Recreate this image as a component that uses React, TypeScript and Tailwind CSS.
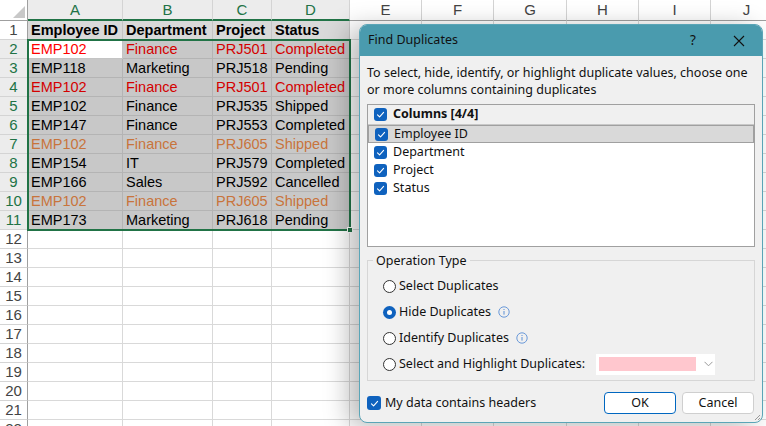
import React from 'react';

const COLS = [
  { l: 'A', w: 95 },
  { l: 'B', w: 90 },
  { l: 'C', w: 59 },
  { l: 'D', w: 78 },
  { l: 'E', w: 72 },
  { l: 'F', w: 72 },
  { l: 'G', w: 73 },
  { l: 'H', w: 72 },
  { l: 'I', w: 72 },
  { l: 'J', w: 72 },
];

type Tone = 'head' | 'red' | 'orange' | 'plain';

const DATA: { cells: string[]; tone: Tone }[] = [
  { cells: ['Employee ID', 'Department', 'Project', 'Status'], tone: 'head' },
  { cells: ['EMP102', 'Finance', 'PRJ501', 'Completed'], tone: 'red' },
  { cells: ['EMP118', 'Marketing', 'PRJ518', 'Pending'], tone: 'plain' },
  { cells: ['EMP102', 'Finance', 'PRJ501', 'Completed'], tone: 'red' },
  { cells: ['EMP102', 'Finance', 'PRJ535', 'Shipped'], tone: 'plain' },
  { cells: ['EMP147', 'Finance', 'PRJ553', 'Completed'], tone: 'plain' },
  { cells: ['EMP102', 'Finance', 'PRJ605', 'Shipped'], tone: 'orange' },
  { cells: ['EMP154', 'IT', 'PRJ579', 'Completed'], tone: 'plain' },
  { cells: ['EMP166', 'Sales', 'PRJ592', 'Cancelled'], tone: 'plain' },
  { cells: ['EMP102', 'Finance', 'PRJ605', 'Shipped'], tone: 'orange' },
  { cells: ['EMP173', 'Marketing', 'PRJ618', 'Pending'], tone: 'plain' },
];

const TOTAL_ROWS = 22;

function cellClass(row: number, col: number, tone: Tone) {
  const inData = col < 4 && row <= DATA.length;
  if (!inData) return 'bg-white border-[#d9d9d9]';
  if (row === 1) return 'bg-[#d9d9d9] border-[#c4c4c4] font-bold text-black';
  const active = row === 2 && col === 0;
  const bg = active ? 'bg-white border-[#c4c4c4]' : 'bg-[#c8c8c8] border-[#b4b4b4]';
  if (tone === 'red') return `${bg} ${active ? 'text-[#ff0000]' : 'text-[#d40000]'}`;
  if (tone === 'orange') return `${bg} text-[#c8743c]`;
  return `${bg} text-black`;
}

function Sheet() {
  return (
    <div className="relative font-['Liberation_Sans',Arial,sans-serif]">
      {/* column headers */}
      <div className="flex h-[21px]">
        <div className="relative w-[28px] shrink-0 border-b border-r border-[#9f9f9f] bg-white">
          <div className="absolute bottom-[2px] right-[2px] h-0 w-0 border-b-[12px] border-l-[12px] border-b-[#c8c8c8] border-l-transparent" />
        </div>
        {COLS.map((c, i) => (
          <div
            key={c.l}
            style={{ width: c.w }}
            className={`shrink-0 border-r border-[#d4d4d4] text-center text-[15px] leading-[19px] ${
              i < 4
                ? 'border-b-2 border-b-[#217346] bg-[#ececec] text-[#217346]'
                : 'border-b border-b-[#9f9f9f] bg-white text-[#444]'
            }`}
          >
            {c.l}
          </div>
        ))}
      </div>
      {/* rows */}
      {Array.from({ length: TOTAL_ROWS }, (_, r) => {
        const row = r + 1;
        const d = DATA[r];
        const selected = row >= 2 && row <= 11;
        return (
          <div key={row} className="flex h-[19px]">
            <div
              className={`w-[28px] shrink-0 border-b border-r border-[#d4d4d4] border-r-[#9f9f9f] text-center text-[15px] leading-[18px] ${
                selected ? 'bg-[#ececec] text-[#217346]' : 'bg-white text-[#444]'
              }`}
            >
              {row}
            </div>
            {COLS.map((c, i) => (
              <div
                key={c.l}
                style={{ width: c.w }}
                className={`shrink-0 overflow-hidden whitespace-nowrap border-b border-r pl-[3px] text-[14.5px] leading-[18px] ${cellClass(
                  row,
                  i,
                  d ? d.tone : 'plain'
                )}`}
              >
                {d && i < 4 ? d.cells[i] : ''}
              </div>
            ))}
          </div>
        );
      })}
      {/* selection frame A2:D11 */}
      <div className="pointer-events-none absolute left-[27px] top-[39px] h-[192px] w-[324px] border-2 border-[#217346]" />
      <div className="absolute left-[347px] top-[227px] h-[6px] w-[6px] border border-white bg-[#217346]" />
    </div>
  );
}

function Check({ className = '' }: { className?: string }) {
  return (
    <span className={`flex h-[13px] w-[13px] shrink-0 items-center justify-center rounded-[3px] bg-[#0f62be] ${className}`}>
      <svg width="9" height="9" viewBox="0 0 9 9" fill="none">
        <path d="M1.5 4.8 3.6 6.8 7.6 2.3" stroke="white" strokeWidth="1.1" strokeLinecap="round" strokeLinejoin="round" />
      </svg>
    </span>
  );
}

function Radio({ on = false }: { on?: boolean }) {
  return on ? (
    <span className="flex h-[13px] w-[13px] shrink-0 items-center justify-center rounded-full bg-[#0f62be]">
      <span className="h-[5px] w-[5px] rounded-full bg-white" />
    </span>
  ) : (
    <span className="h-[13px] w-[13px] shrink-0 rounded-full border border-[#333] bg-white" />
  );
}

function Info() {
  return (
    <svg width="12" height="12" viewBox="0 0 12 12" fill="none" className="ml-[7px] shrink-0">
      <circle cx="6" cy="6" r="5.2" stroke="#5b8fd6" strokeWidth="0.9" />
      <rect x="5.5" y="5" width="1" height="3.6" fill="#5b8fd6" />
      <rect x="5.5" y="3" width="1" height="1" fill="#5b8fd6" />
    </svg>
  );
}

function Dialog() {
  const items = ['Employee ID', 'Department', 'Project', 'Status'];
  return (
    <div className="absolute left-[359px] top-[24px] flex h-[399px] w-[404px] flex-col overflow-hidden rounded-[8px] border border-[#5aa5b7] bg-[#f0f0f0] font-['Noto_Sans','Open_Sans',sans-serif] text-[12.5px] text-[#111] shadow-[-10px_4px_26px_rgba(0,0,0,0.28)]">
      {/* title bar */}
      <div className="flex h-[31px] shrink-0 items-center bg-[#4a9bae] pl-[8px]">
        <span>Find Duplicates</span>
        <span className="ml-auto w-[46px] text-center text-[13.5px]">?</span>
        <span className="flex w-[46px] justify-center">
          <svg width="12" height="12" viewBox="0 0 12 12">
            <path d="M1 1 11 11M11 1 1 11" stroke="#111" strokeWidth="1.1" />
          </svg>
        </span>
      </div>

      <div className="flex flex-1 flex-col px-[7px]">
        <p className="mt-[8px] leading-[17px]">
          To select, hide, identify, or highlight duplicate values, choose one or more columns containing duplicates
        </p>

        {/* columns list */}
        <div className="mt-[6px] h-[143px] border border-[#a0a0a0] bg-white">
          <div className="flex h-[20px] items-center border-b border-[#c8c8c8] bg-[#f0f0f0] pl-[6px]">
            <Check />
            <span className="ml-[6px] font-bold">Columns [4/4]</span>
          </div>
          {items.map((t, i) => (
            <div
              key={t}
              className={`flex h-[18px] items-center pl-[6px] ${
                i === 0 ? 'border border-[#a0a0a0] bg-[#d9d9d9] pl-[5px]' : ''
              }`}
            >
              <Check />
              <span className="ml-[6px]">{t}</span>
            </div>
          ))}
        </div>

        {/* operation type */}
        <fieldset className="mt-[5px] border border-[#d6d6d6] pb-[3px] pt-[4px]">
          <legend className="ml-[5px] px-[3px] leading-[17px]">Operation Type</legend>
          <div className="pl-[15px]">
            <div className="flex h-[26px] items-center">
              <Radio />
              <span className="ml-[3px]">Select Duplicates</span>
            </div>
            <div className="flex h-[26px] items-center">
              <Radio on />
              <span className="ml-[3px]">Hide Duplicates</span>
              <Info />
            </div>
            <div className="flex h-[26px] items-center">
              <Radio />
              <span className="ml-[3px]">Identify Duplicates</span>
              <Info />
            </div>
            <div className="flex h-[26px] items-center">
              <Radio />
              <span className="ml-[3px]">Select and Highlight Duplicates:</span>
              <div className="ml-[11px] flex h-[21px] w-[119px] items-center bg-white pl-[3px]">
                <span className="h-[14px] w-[97px] bg-[#ffc7ce]" />
                <svg width="9" height="6" viewBox="0 0 9 6" className="ml-[8px]">
                  <path d="M0.5 0.8 4.5 4.8 8.5 0.8" stroke="#9a9a9a" fill="none" strokeWidth="1" />
                </svg>
              </div>
            </div>
          </div>
        </fieldset>

        {/* footer */}
        <div className="mt-[11px] flex h-[22px] items-center">
          <Check className="h-[14px] w-[14px]" />
          <span className="ml-[4px]">My data contains headers</span>
          <button className="ml-auto h-[22px] w-[72px] rounded-[4px] border border-[#0067c0] bg-white">OK</button>
          <button className="ml-[6px] mr-[1px] h-[22px] w-[72px] rounded-[4px] border border-[#cfcfcf] bg-white">Cancel</button>
        </div>
      </div>

      <svg width="8" height="8" viewBox="0 0 8 8" className="absolute bottom-[1px] right-[1px]">
        <path d="M7 2 2 7M7 5 5 7" stroke="#9a9a9a" strokeWidth="1" />
      </svg>
    </div>
  );
}

export default function App() {
  return (
    <div className="relative h-[426px] w-[766px] overflow-hidden bg-white">
      <Sheet />
      <Dialog />
    </div>
  );
}
